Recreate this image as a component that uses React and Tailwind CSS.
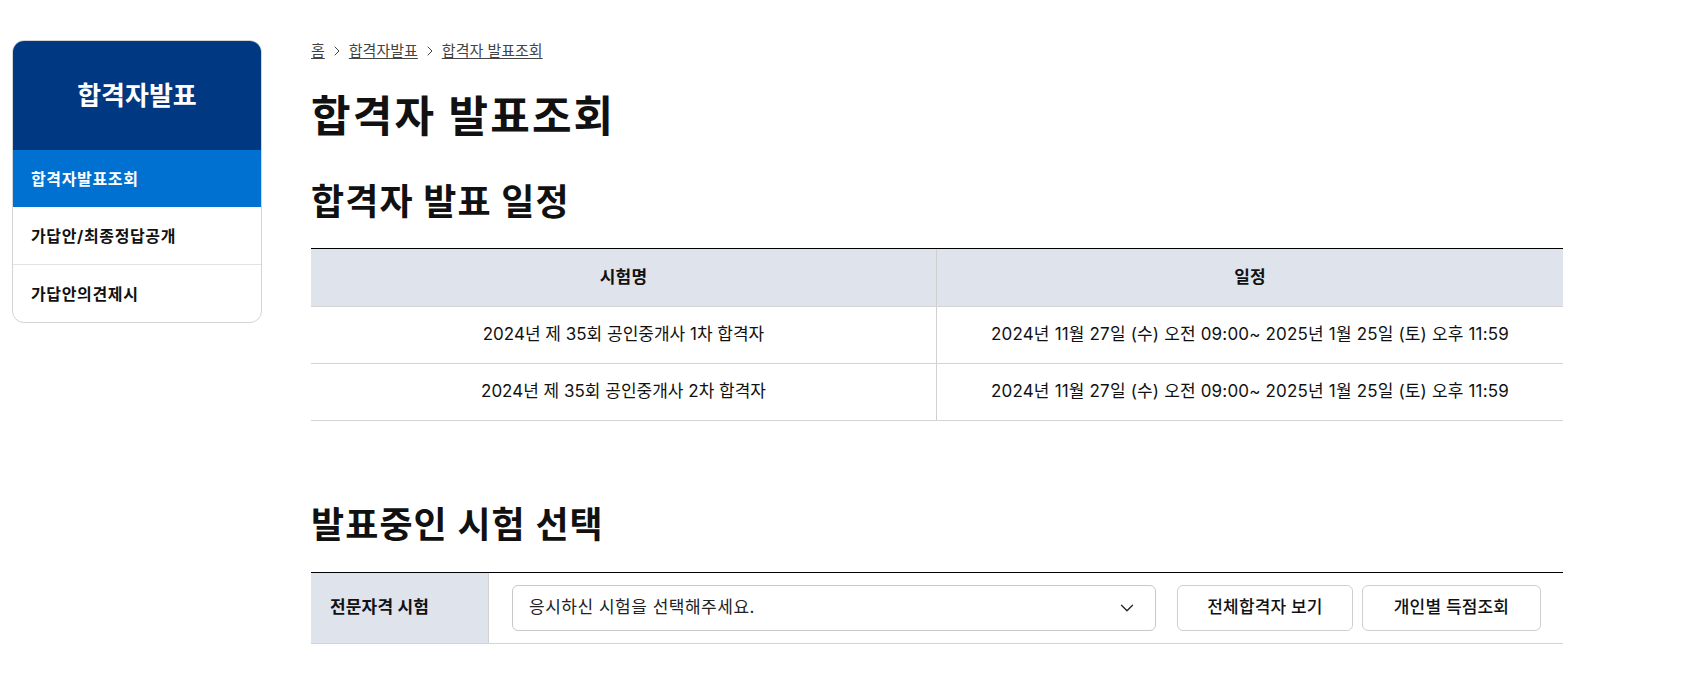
import React from 'react';
import { ChevronRight, ChevronDown } from 'lucide-react';

const menuItems = [
  { label: '합격자발표조회', active: true },
  { label: '가답안/최종정답공개', active: false },
  { label: '가답안의견제시', active: false },
];

const schedule = [
  {
    name: '2024년 제 35회 공인중개사 1차 합격자',
    date: '2024년 11월 27일 (수) 오전 09:00~ 2025년 1월 25일 (토) 오후 11:59',
  },
  {
    name: '2024년 제 35회 공인중개사 2차 합격자',
    date: '2024년 11월 27일 (수) 오전 09:00~ 2025년 1월 25일 (토) 오후 11:59',
  },
];

const App = () => {
  return (
    <div className="min-h-screen bg-white text-[#111] font-['Inter','Noto_Sans_CJK_KR',sans-serif]">
      <div className="flex pl-3 pt-10 gap-[49px]">
        {/* Sidebar */}
        <aside className="w-[250px] shrink-0 self-start rounded-xl border border-[#d4d4d4] overflow-hidden">
          <div className="h-[109px] bg-[#003882] flex items-center justify-center">
            <h2 className="text-white text-[26px] leading-none font-bold tracking-[0em]">합격자발표</h2>
          </div>
          <nav>
            {menuItems.map((item, i) => (
              <a
                key={item.label}
                href="#"
                className={`flex items-center h-[57px] pl-[18px] text-[16px] font-bold tracking-[0.04em] ${
                  item.active ? 'bg-[#0070d1] text-white' : 'text-[#111]'
                } ${i === 2 ? 'h-[58px] border-t border-[#e3e3e3]' : ''}`}
              >
                {item.label}
              </a>
            ))}
          </nav>
        </aside>

        {/* Main Content */}
        <main className="w-[1252px] shrink-0">
          <div className="h-[22px] flex items-center gap-1 text-[15px] text-[#444]">
            <a href="#" className="underline underline-offset-2">홈</a>
            <ChevronRight size={16} strokeWidth={1.5} />
            <a href="#" className="underline underline-offset-2">합격자발표</a>
            <ChevronRight size={16} strokeWidth={1.5} />
            <a href="#" className="underline underline-offset-2">합격자 발표조회</a>
          </div>

          <h1 className="mt-[26px] text-[43px] leading-[56px] font-bold tracking-[0.05em]">합격자 발표조회</h1>

          <h2 className="mt-9 text-[36px] leading-[44px] font-bold tracking-[0.03em]">합격자 발표 일정</h2>

          <div className="mt-6 border-t border-black text-[17px]">
            <div className="grid grid-cols-2 h-[58px] bg-[#dfe3ec] border-b border-[#d4d4d4] font-bold tracking-[0.01em]">
              <div className="flex items-center justify-center border-r border-[#d0d0d0]">시험명</div>
              <div className="flex items-center justify-center">일정</div>
            </div>
            {schedule.map((row) => (
              <div key={row.name} className="grid grid-cols-2 h-[57px] border-b border-[#d4d4d4]">
                <div className="flex items-center justify-center border-r border-[#d0d0d0]">{row.name}</div>
                <div className="flex items-center justify-center tracking-[0.01em]">{row.date}</div>
              </div>
            ))}
          </div>

          <h2 className="mt-[82px] text-[36px] leading-[44px] font-bold tracking-[0.03em]">발표중인 시험 선택</h2>

          <div className="mt-[25px] flex h-[72px] border-t border-black border-b border-b-[#d4d4d4]">
            <div className="w-[178px] shrink-0 bg-[#dfe3ec] border-r border-[#d0d0d0] flex items-center pl-[19px] text-[17px] font-bold tracking-[0.01em]">
              전문자격 시험
            </div>
            <div className="flex-1 flex items-center pl-[23px] pr-[22px]">
              <button className="flex-1 h-[46px] mr-[21px] rounded-md border border-[#c9c9c9] flex items-center justify-between pl-4 pr-[17px] text-[17px] tracking-[0.03em] text-[#222]">
                <span>응시하신 시험을 선택해주세요.</span>
                <ChevronDown size={22} strokeWidth={1.4} />
              </button>
              <div className="flex gap-[9px] text-[17px] tracking-[0.01em]">
                <button className="w-[176px] h-[46px] rounded-md border border-[#cfcfcf] font-medium">전체합격자 보기</button>
                <button className="w-[179px] h-[46px] rounded-md border border-[#cfcfcf] font-medium">개인별 득점조회</button>
              </div>
            </div>
          </div>
        </main>
      </div>
    </div>
  );
};

export default App;
